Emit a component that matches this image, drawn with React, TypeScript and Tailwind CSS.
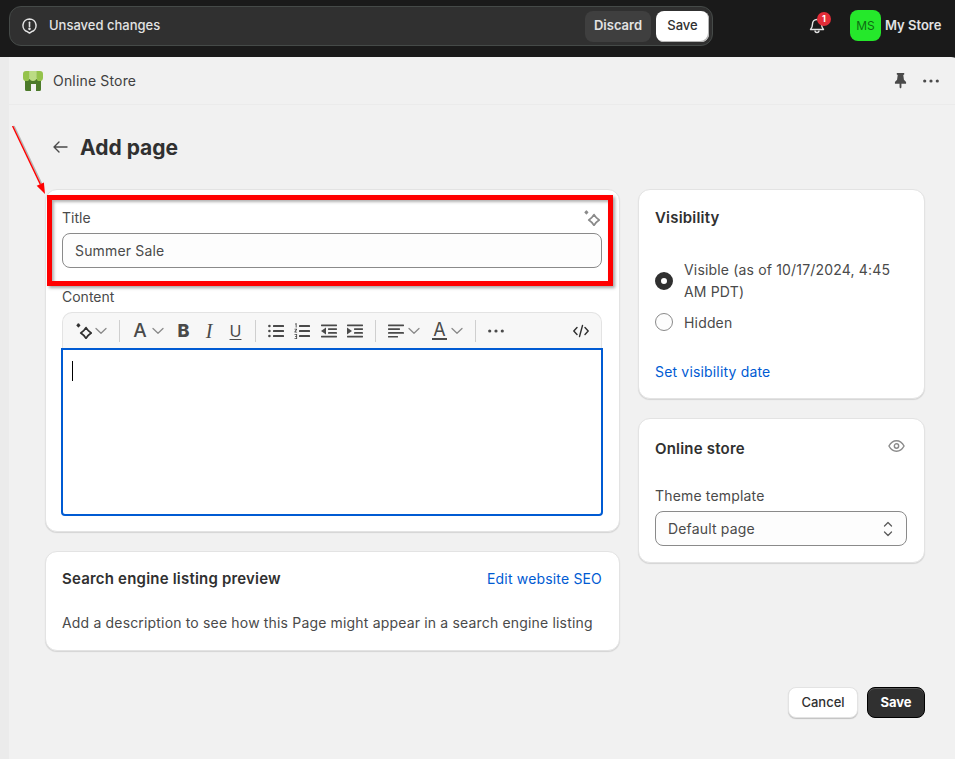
import React from "react";

const Chevron = ({ className = "" }: { className?: string }) => (
  <svg width="12" height="8" viewBox="0 0 12 8" fill="none" stroke="#8a8a8a" strokeWidth="1.3" strokeLinecap="round" strokeLinejoin="round" className={className}>
    <path d="M1 1.5 6 6.2l5-4.7" />
  </svg>
);

const Sparkle = ({ color = "#303030" }: { color?: string }) => (
  <svg width="16" height="16" viewBox="0 0 16 16" fill="none">
    <rect x="0.8" y="0.8" width="3.2" height="3.2" rx="0.6" transform="rotate(45 2.4 2.4)" fill={color} />
    <path d="M10 4.6Q12 8 15.2 10 12 12 10 15.4 8 12 4.8 10 8 8 10 4.6Z" stroke={color} strokeWidth="1.8" strokeLinejoin="round" />
  </svg>
);

const Divider = ({ className = "" }: { className?: string }) => <div className={`w-px h-[22px] bg-[#cfcfcf] ${className}`} />;

const AlignLeft = ({ className = "" }: { className?: string }) => (
  <svg className={className} width="16" height="14" viewBox="0 0 16 14" fill="#4a4a4a">
    <rect y="0.5" width="16" height="1.7" rx="0.4" />
    <rect y="4.3" width="12" height="1.7" rx="0.4" />
    <rect y="8.1" width="16" height="1.7" rx="0.4" />
    <rect y="11.9" width="10" height="1.7" rx="0.4" />
  </svg>
);

const BulletList = ({ className = "" }: { className?: string }) => (
  <svg className={className} width="16" height="14" viewBox="0 0 16 14" fill="#4a4a4a">
    <circle cx="1.4" cy="2" r="1.3" /><circle cx="1.4" cy="7" r="1.3" /><circle cx="1.4" cy="12" r="1.3" />
    <rect x="5" y="1.1" width="11" height="1.8" rx="0.5" /><rect x="5" y="6.1" width="11" height="1.8" rx="0.5" /><rect x="5" y="11.1" width="11" height="1.8" rx="0.5" />
  </svg>
);

const NumberList = ({ className = "" }: { className?: string }) => (
  <svg className={className} width="16" height="16" viewBox="0 0 16 16" fill="#4a4a4a">
    <rect x="5" y="2.1" width="11" height="1.8" rx="0.5" /><rect x="5" y="7.1" width="11" height="1.8" rx="0.5" /><rect x="5" y="12.1" width="11" height="1.8" rx="0.5" />
    <path d="M1 .8 2.6 0v4.4H1.7V1.3L1 1.6zM.5 5.8h2.5v1L1.5 8.7h1.6v.7H.5v-.8L2 6.6H.5zM.5 11h2.6v5H.5v-.7h1.7V14H1v-.7h1.2v-1.600H.5z" />
  </svg>
);

const Indent = ({ flip = false, className = "" }: { flip?: boolean; className?: string }) => (
  <svg className={className} width="16" height="14" viewBox="0 0 16 14" fill="#4a4a4a">
    <rect y="0.5" width="16" height="1.7" rx="0.4" />
    <rect x="7" y="4.3" width="9" height="1.7" rx="0.4" />
    <rect x="7" y="8.1" width="9" height="1.7" rx="0.4" />
    <rect y="11.8" width="16" height="1.7" rx="0.4" />
    {flip ? <path d="M0 7 5 3.6v6.8z" /> : <path d="M5 7 0 3.6v6.8z" />}
  </svg>
);

const Dots = ({ className = "" }: { className?: string }) => (
  <svg className={className} width="16" height="4" viewBox="0 0 16 4" fill="#4a4a4a">
    <circle cx="1.7" cy="2" r="1.6" /><circle cx="8" cy="2" r="1.6" /><circle cx="14.3" cy="2" r="1.6" />
  </svg>
);

const Card = ({ className = "", children }: { className?: string; children: React.ReactNode }) => (
  <div className={`bg-white rounded-[12px] border border-[#e3e3e3] shadow-[0_1px_1px_rgba(0,0,0,0.12)] ${className}`}>{children}</div>
);

export default function App() {
  return (
    <div className="relative w-[955px] h-[759px] overflow-hidden flex flex-col bg-[#1a1a1a] text-[14px] text-[#303030] font-['Inter',sans-serif]">
      {/* top bar */}
      <div className="h-[57px] flex items-start shrink-0">
        <div className="ml-[9px] mt-[6px] w-[704px] h-[40px] flex items-center rounded-[12px] bg-[#303030] border border-[#454a48] pl-[12px] pr-[3px]">
          <svg width="15" height="16" viewBox="0 0 16 17" fill="none" stroke="#e3e3e3" strokeWidth="1.6">
            <path d="M8 1a7 7 0 0 1 2 13.7L8 16l-2-1.3A7 7 0 0 1 8 1z" strokeLinejoin="round" />
            <path d="M8 4.5v4.5" strokeLinecap="round" strokeWidth="1.7" />
            <circle cx="8" cy="11.5" r="0.6" fill="#e3e3e3" />
          </svg>
          <span className="ml-[12px] text-[13px] font-medium text-[#e3e3e3]">Unsaved changes</span>
          <div className="ml-auto flex items-center gap-[5px]">
            <div className="h-[31px] w-[66px] flex items-center justify-center rounded-[8px] bg-[#3f3f3f] text-[13px] font-semibold text-[#e3e3e3]">Discard</div>
            <div className="h-[31px] w-[53px] flex items-center justify-center rounded-[8px] bg-white shadow-[inset_-1px_-1px_0_#b5b5b5] text-[13px] font-medium text-[#303030]">Save</div>
          </div>
        </div>
        <div className="relative ml-[95px] mt-[17px]">
          <svg width="18" height="18" viewBox="0 0 18 18" fill="none" stroke="#e3e3e3" strokeWidth="1.4" strokeLinejoin="round">
            <path d="M9 2.5c-2.8 0-4.500 2-4.500 4.500 0 2.500-.7 4-2 5.500h13c-1.300-1.500-2-3-2-5.500 0-2.500-1.700-4.500-4.500-4.500z" />
            <path d="M7 13.500c0 2.700 4 2.700 4 0" />
          </svg>
          <div className="absolute -top-[5px] left-[9px] w-[14px] h-[14px] rounded-full bg-[#e22c38] flex items-center justify-center text-[9px] font-bold text-white">1</div>
        </div>
        <div className="ml-[24px] mt-[10px] flex items-center">
          <div className="w-[31px] h-[31px] rounded-[8px] bg-[#25e82b] flex items-center justify-center text-[12px] text-[#0e6b12]">MS</div>
          <span className="ml-[4px] text-[13px] font-semibold text-[#e3e3e3]">My Store</span>
        </div>
      </div>

      <div className="flex flex-1 min-h-0">
        <div className="w-[9px] bg-[#ebebeb] shrink-0" />
        <div className="flex-1 bg-[#f1f1f1] rounded-tr-[10px] flex flex-col">
          {/* app header */}
          <div className="h-[48px] shrink-0 flex items-center border-b border-[#ebebeb] pl-[13px] pr-[16px]">
            <svg width="22" height="22" viewBox="0 0 22 22">
              <path d="M3 9h16v10.500a1.500 1.500 0 0 1-1.500 1.500H14v-7H9v7H4.500A1.500 1.500 0 0 1 3 19.500z" fill="#4c7a2a" />
              <path d="M4 1h3.700v6.700a3.300 3.300 0 0 1-6.700 0V4a3 3 0 0 1 3-3z" fill="#95c34c" />
              <path d="M7.700 1h6.600v6.700a3.300 3.300 0 0 1-6.600 0z" fill="#bcdc84" />
              <path d="M14.300 1H18a3 3 0 0 1 3 3v3.700a3.300 3.300 0 0 1-6.700 0z" fill="#95c34c" />
            </svg>
            <span className="ml-[9px] text-[14px] tracking-[0.17px] text-[#404040]">Online Store</span>
            <svg className="ml-auto" width="13" height="17" viewBox="0 0 14 17" fill="#4a4a4a">
              <path d="M3 .5h8V2l-1 .7.7 5L13 10v2H8v4l-1 1-1-1v-4H1v-2l2.300-2.300.7-5L3 2z" />
            </svg>
            <Dots className="ml-[16px] mr-[6px]" />
          </div>

          {/* page */}
          <div className="flex-1 px-[36px] tracking-[0.17px]">
            <div className="h-[84px] flex items-start pt-[29px]">
              <svg className="ml-[8px] mt-[7px]" width="15" height="12" viewBox="0 0 15 12" fill="none" stroke="#4a4a4a" strokeWidth="1.4" strokeLinecap="round" strokeLinejoin="round">
                <path d="M14 6H1M6 1 1 6l5 5" />
              </svg>
              <h1 className="ml-[12px] text-[21px] leading-[28px] font-bold tracking-normal text-[#303030]">Add page</h1>
            </div>

            <div className="flex gap-[18px] items-start">
              <div className="w-[575px] flex flex-col gap-[19px]">
                <Card className="h-[343px] px-[16px] pt-[17px]">
                  <div className="flex items-center justify-between h-[20px]">
                    <span className="text-[14px] tracking-normal text-[#4a4a4a]">Title</span>
                    <div className="mt-[1px] mr-[3px]"><Sparkle color="#8a8a8a" /></div>
                  </div>
                  <div className="mt-[6px] h-[35px] w-[540px] flex items-center px-[12px] rounded-[8px] border border-[#8a8a8a] bg-[#fdfdfd] text-[#4a4a4a]">Summer Sale</div>
                  <div className="mt-[19px] h-[20px] text-[14px] leading-[20px] tracking-normal text-[#4a4a4a]">Content</div>
                  <div className="mt-[5px] w-[540px] h-[36px] flex items-center rounded-t-[10px] border border-b-0 border-[#e3e3e3] bg-[#f7f7f7] pl-[13px] pr-[12px] tracking-normal">
                    <Sparkle />
                    <Chevron className="ml-[3px]" />
                    <Divider className="ml-[12px]" />
                    <span className="ml-[12px] w-[16px] text-center text-[19px] leading-none font-medium text-[#4a4a4a]">A</span>
                    <Chevron className="ml-[4px]" />
                    <span className="ml-[13px] w-[13px] text-center text-[18px] leading-none font-extrabold text-[#4a4a4a]">B</span>
                    <span className="ml-[14px] w-[10px] text-center text-[20px] leading-none italic font-['Liberation_Serif',serif] text-[#4a4a4a]">I</span>
                    <span className="ml-[15px] w-[13px] text-center text-[16px] leading-none underline underline-offset-2 text-[#4a4a4a]">U</span>
                    <Divider className="ml-[13px]" />
                    <BulletList className="ml-[12px]" />
                    <NumberList className="ml-[10px]" />
                    <Indent flip className="ml-[11px]" />
                    <Indent className="ml-[10px]" />
                    <Divider className="ml-[12px]" />
                    <AlignLeft className="ml-[12px]" />
                    <Chevron className="ml-[4px]" />
                    <div className="ml-[12px] w-[15px] flex flex-col items-center">
                      <span className="text-[18px] leading-[16px] text-[#4a4a4a]">A</span>
                      <div className="w-[15px] h-[2px] bg-[#4a4a4a]" />
                    </div>
                    <Chevron className="ml-[4px]" />
                    <Divider className="ml-[12px]" />
                    <Dots className="ml-[12px]" />
                    <svg className="ml-auto" width="16" height="16" viewBox="0 0 16 16" fill="none" stroke="#303030" strokeWidth="1.4" strokeLinecap="round" strokeLinejoin="round">
                      <path d="M4 4.5 .8 8 4 11.500M12 4.500 15.200 8 12 11.500M9.500 2.500 6.500 13.500" />
                    </svg>
                  </div>
                  <div className="-ml-[1px] w-[542px] h-[168px] rounded-b-[4px] border-2 border-[#005bd3] bg-white pl-[9px] pt-[11px]">
                    <div className="w-px h-[20px] bg-black" />
                  </div>
                </Card>

                <Card className="h-[100px] px-[16px] pt-[16px]">
                  <div className="flex items-center justify-between h-[20px]">
                    <span className="mt-[2px] text-[15px] tracking-[0.2px] font-semibold text-[#303030]">Search engine listing preview</span>
                    <span className="mr-[1px] text-[#005bd3]">Edit website SEO</span>
                  </div>
                  <p className="mt-[24px] text-[#4a4a4a]">Add a description to see how this Page might appear in a search engine listing</p>
                </Card>
              </div>

              <div className="w-[287px] flex flex-col gap-[19px]">
                <Card className="h-[210px] px-[16px] pt-[17px]">
                  <div className="h-[20px] text-[15px] tracking-[0.2px] font-semibold text-[#303030]">Visibility</div>
                  <div className="mt-[32px] flex items-center">
                    <div className="w-[18px] h-[18px] rounded-full border-[6px] border-[#303030] bg-white shrink-0" />
                    <span className="ml-[11px] leading-[22px] text-[#4a4a4a]">Visible (as of 10/17/2024, 4:45<br />AM PDT)</span>
                  </div>
                  <div className="mt-[9px] flex items-center h-[20px]">
                    <div className="w-[18px] h-[18px] rounded-full border border-[#8a8a8a] bg-[#fdfdfd] shrink-0" />
                    <span className="ml-[11px] text-[#4a4a4a]">Hidden</span>
                  </div>
                  <div className="mt-[29px] text-[#005bd3]">Set visibility date</div>
                </Card>

                <Card className="h-[145px] px-[16px] pt-[19px]">
                  <div className="flex items-start justify-between h-[20px]">
                    <span className="text-[15px] tracking-[0.2px] font-semibold text-[#303030]">Online store</span>
                    <svg className="mt-[1px] mr-[3px]" width="17" height="14" viewBox="0 0 18 14" fill="none" stroke="#8a8a8a" strokeWidth="1.5">
                      <path d="M1 7c2-3.700 4.800-5.500 8-5.500S15 3.300 17 7c-2 3.700-4.800 5.500-8 5.500S3 10.700 1 7z" />
                      <circle cx="9" cy="7" r="2.3" />
                    </svg>
                  </div>
                  <div className="mt-[27px] h-[20px] text-[#4a4a4a]">Theme template</div>
                  <div className="mt-[6px] h-[35px] w-[252px] flex items-center justify-between rounded-[8px] border border-[#8a8a8a] bg-[#fdfdfd] pl-[12px] pr-[13px] text-[#4a4a4a]">
                    <span>Default page</span>
                    <svg width="10" height="16" viewBox="0 0 10 16" fill="none" stroke="#5c5c5c" strokeWidth="1.3" strokeLinecap="round" strokeLinejoin="round">
                      <path d="M1.500 5 5 1.500 8.500 5M1.500 11 5 14.500 8.500 11" />
                    </svg>
                  </div>
                </Card>
              </div>
            </div>

            <div className="mt-[36px] flex justify-end gap-[9px] w-[880px] tracking-normal">
              <div className="h-[31px] w-[70px] flex items-center justify-center rounded-[8px] bg-white border border-[#e3e3e3] shadow-[0_1px_1px_rgba(0,0,0,0.2)] text-[13px] font-medium text-[#303030]">Cancel</div>
              <div className="h-[31px] w-[58px] flex items-center justify-center rounded-[8px] bg-[#303030] border border-black shadow-[inset_0_1px_0_#555] text-[13px] font-bold text-white">Save</div>
            </div>
          </div>
        </div>
      </div>

      {/* annotation overlay */}
      <div className="absolute left-[47px] top-[195px] w-[566px] h-[91px] border-[5px] border-[#ff0000] shadow-[2px_2px_3px_rgba(0,0,0,0.35),inset_2px_2px_3px_rgba(0,0,0,0.3)]" />
      <svg className="absolute left-[8px] top-[120px]" width="44" height="78" viewBox="0 0 44 78" fill="none">
        <path d="M6 6 33.800 64" stroke="#000000" strokeOpacity="0.25" strokeWidth="1.5" />
        <path d="M4.600 6 32.300 64.100" stroke="#ff0000" strokeWidth="1.4" />
        <path d="M37 74 28.700 65.800 35.900 62.400z" fill="#ff0000" />
      </svg>
    </div>
  );
}
